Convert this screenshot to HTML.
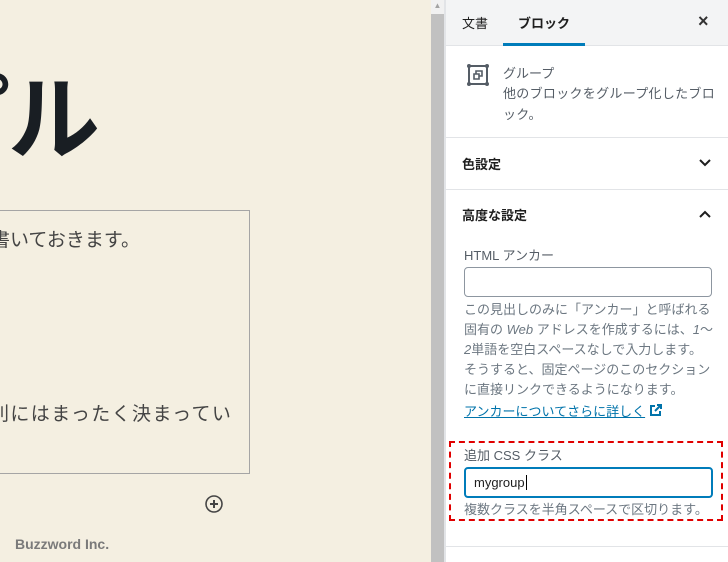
<!DOCTYPE html>
<html><head><meta charset="utf-8">
<style>
*{margin:0;padding:0;box-sizing:border-box}
body{width:728px;height:562px;overflow:hidden;position:relative;background:#f4efe1;font-family:"Liberation Sans","Noto Sans CJK JP",sans-serif;color:#1e1e1e}
.abs{position:absolute;white-space:nowrap}
#sb{position:absolute;left:431px;top:0;width:13px;height:562px;background:#c1c1c1}
#sbt{position:absolute;left:431px;top:0;width:13px;height:14px;background:#f1f1f1;color:#a3a3a3;font-size:8px;text-align:center;line-height:12px}
#side{position:absolute;left:444px;top:0;width:284px;height:562px;background:#fff;border-left:2px solid #e2e4e7}
.hr{position:absolute;left:0;width:284px;height:1px;background:#e2e4e7}
.t13{font-size:13px}
.help{font-size:13px;color:#6c7781;line-height:20px;position:absolute;left:18px;white-space:nowrap}
</style></head><body>
<div class="abs" style="left:-82px;top:46px;font-size:92px;font-weight:bold;color:#191e23;letter-spacing:-2px">プル</div>
<div style="position:absolute;left:-2px;top:210px;width:252px;height:264px;border:1px solid #a5a5a5"></div>
<div class="abs" style="left:-9px;top:225px;font-size:19px;color:#444">書いておきます。</div>
<div class="abs" style="left:-10px;top:399px;font-size:19px;color:#444;letter-spacing:1.4px">則にはまったく決まってい</div>
<svg style="position:absolute;left:204px;top:494px" width="20" height="20" viewBox="0 0 20 20"><circle cx="10" cy="10" r="8" fill="none" stroke="#444" stroke-width="1.6"/><path d="M10 6v8M6 10h8" stroke="#444" stroke-width="2"/></svg>
<div class="abs" style="left:15px;top:536px;font-size:14px;color:#7a7a7a;font-weight:bold">Buzzword Inc.</div>
<div id="sb"></div><div id="sbt">▲</div>
<div id="side">
 <div style="position:absolute;left:0;top:0;width:284px;height:46px;background:#f3f4f5;border-bottom:1px solid #e2e4e7"></div>
 <div class="abs t13" style="left:16px;top:13px">文書</div>
 <div class="abs t13" style="left:72px;top:13px;font-weight:bold">ブロック</div>
 <div style="position:absolute;left:57px;top:43px;width:82px;height:3px;background:#007cba"></div>
 <div class="abs" style="left:252px;top:11px;font-size:18px;font-weight:bold;color:#333">×</div>
 <svg style="position:absolute;left:20px;top:63px" width="24" height="24" viewBox="0 0 24 24"><rect x="3" y="3" width="18" height="18" fill="none" stroke="#555d66" stroke-width="2"/><circle cx="3" cy="3" r="2" fill="#555d66"/><circle cx="21" cy="3" r="2" fill="#555d66"/><circle cx="3" cy="21" r="2" fill="#555d66"/><circle cx="21" cy="21" r="2" fill="#555d66"/><path d="M10 8h6v5h-3v3H8v-5h2z M10 11v-3 M10 11h3v2" fill="none" stroke="#555d66" stroke-width="1.6"/></svg>
 <div class="abs t13" style="left:57px;top:63px;color:#555d66">グループ</div>
 <div class="t13" style="position:absolute;left:57px;top:83px;line-height:21px;color:#555d66;white-space:nowrap;letter-spacing:0.3px">他のブロックをグループ化したブロ<br>ック。</div>
 <div class="hr" style="top:137px"></div>
 <div class="abs t13" style="left:16px;top:154px;font-weight:bold">色設定</div>
 <svg style="position:absolute;left:252px;top:156px" width="14" height="14" viewBox="0 0 14 14"><path d="M2 4l5 5 5-5" fill="none" stroke="#1e1e1e" stroke-width="2"/></svg>
 <div class="hr" style="top:189px"></div>
 <div class="abs t13" style="left:16px;top:205px;font-weight:bold">高度な設定</div>
 <svg style="position:absolute;left:252px;top:207px" width="14" height="14" viewBox="0 0 14 14"><path d="M2 10l5-5 5 5" fill="none" stroke="#1e1e1e" stroke-width="2"/></svg>
 <div class="abs t13" style="left:18px;top:245px;color:#555d66">HTML アンカー</div>
 <div style="position:absolute;left:18px;top:267px;width:248px;height:30px;border:1px solid #8d96a0;border-radius:4px"></div>
 <div class="help" style="top:300px">この見出しのみに「アンカー」と呼ばれる<br>固有の <i>Web</i> アドレスを作成するには、<i>1</i>～<br><i>2</i>単語を空白スペースなしで入力します。<br>そうすると、固定ページのこのセクション<br>に直接リンクできるようになります。</div>
 <div class="abs t13" style="left:18px;top:401px;color:#0073aa;text-decoration:underline">アンカーについてさらに詳しく</div>
 <svg style="position:absolute;left:203px;top:403px" width="14" height="14" viewBox="0 0 14 14"><path d="M6 3H2v9h9V8 M8 2h4v4 M12 2L6 8" fill="none" stroke="#0073aa" stroke-width="2"/></svg>
 <div style="position:absolute;left:3px;top:441px;width:274px;height:80px;border:2px dashed #e00000"></div>
 <div class="abs t13" style="left:18px;top:445px;color:#555d66">追加 CSS クラス</div>
 <div style="position:absolute;left:18px;top:467px;width:249px;height:31px;border:2px solid #007cba;border-radius:4px"></div>
 <div class="abs t13" style="left:28px;top:475px;color:#1e1e1e">mygroup<span style="border-left:1px solid #000;margin-left:1px"></span></div>
 <div class="help" style="top:500px">複数クラスを半角スペースで区切ります。</div>
 <div class="hr" style="top:546px"></div>
</div>
</body></html>
